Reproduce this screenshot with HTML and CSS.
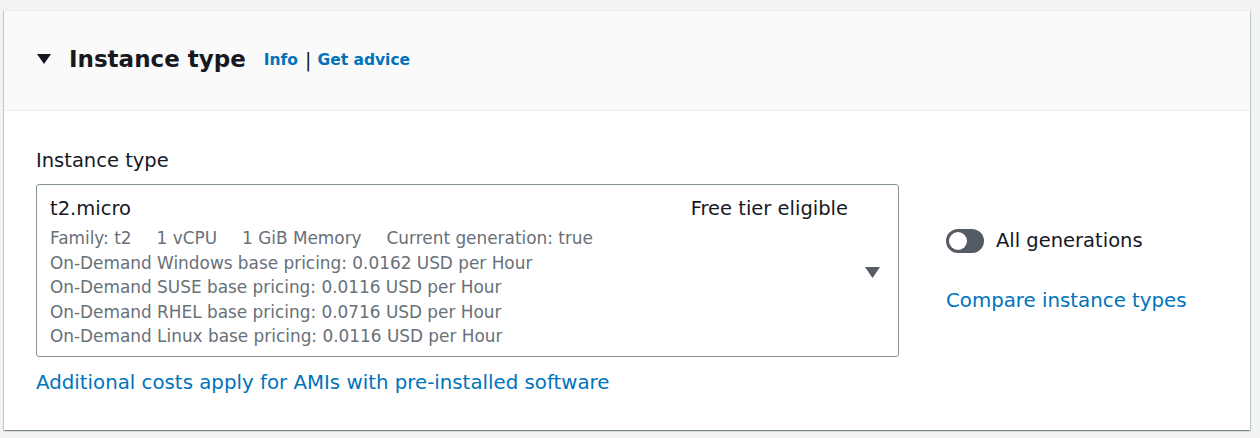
FILE: index.html
```html
<!DOCTYPE html>
<html>
<head>
<meta charset="utf-8">
<link rel="stylesheet" href="styles.css">
</head>
<body>
<section class="card">
  <header class="card-header">
    <svg class="caret" width="14" height="11" viewBox="0 0 14 11"><path d="M0 0 H14 L7 10 Z" fill="#16191f"/></svg>
    <h2 class="title">Instance type</h2>
    <span class="links"><a class="link">Info</a><span class="sep">|</span><a class="link">Get advice</a></span>
  </header>
  <div class="card-body">
    <div class="field">
      <div class="label">Instance type</div>
      <div class="select">
        <div class="select-content">
          <div class="row-top"><span class="name">t2.micro</span><span class="free">Free tier eligible</span></div>
          <div class="meta"><span>Family: t2</span><span>1 vCPU</span><span>1 GiB Memory</span><span>Current generation: true</span></div>
          <div class="desc">On-Demand Windows base pricing: 0.0162 USD per Hour</div>
          <div class="desc">On-Demand SUSE base pricing: 0.0116 USD per Hour</div>
          <div class="desc">On-Demand RHEL base pricing: 0.0716 USD per Hour</div>
          <div class="desc">On-Demand Linux base pricing: 0.0116 USD per Hour</div>
        </div>
        <svg class="dd" width="15" height="11" viewBox="0 0 15 11"><path d="M0 0 H15 L7.5 11 Z" fill="#545b64"/></svg>
      </div>
      <a class="link plain">Additional costs apply for AMIs with pre-installed software</a>
    </div>
    <div class="side">
      <div class="toggle-row"><span class="toggle"><span class="knob"></span></span><span class="toggle-label">All generations</span></div>
      <a class="link plain">Compare instance types</a>
    </div>
  </div>
</section>
</body>
</html>
```
FILE: styles.css
```css
* { box-sizing: border-box; }
body {
  margin: 0;
  background: #f2f3f3;
  font-family: "DejaVu Sans", "Open Sans", sans-serif;
  color: #16191f;
  padding: 10px 10px 8px 4px;
}
.card {
  background: #fff;
  box-shadow: 0 1px 1px 0 rgba(0,28,36,0.3), 1px 1px 1px 0 rgba(0,28,36,0.15), -1px 1px 1px 0 rgba(0,28,36,0.15);
  border-top: 1px solid #eaeded;
}
.card-header {
  background: #fafafa;
  height: 100px;
  border-bottom: 1px solid #eaeded;
  display: flex;
  align-items: center;
  padding-left: 33px;
  padding-bottom: 4px;
}
.caret { margin-right: 18px; margin-top: 2px; }
.title {
  margin: 0;
  font-size: 23px;
  font-weight: 700;
}
.links { margin-left: 18px; font-size: 15.5px; font-weight: 700; display: flex; align-items: center; margin-top: 3px; }
.sep { color: #16191f; font-weight: 400; margin: 0 6px 0 7px; font-size: 19px; }
.link { color: #0073bb; text-decoration: none; }
.link.plain { font-weight: 400; font-size: 19.8px; line-height: 24px; }
.card-body {
  display: flex;
  padding: 39px 32px 35px 32px;
}
.field { display: flex; flex-direction: column; width: 863px; }
.label { font-size: 19.5px; line-height: 22px; margin-bottom: 12px; }
.select {
  border: 1px solid #879596;
  border-radius: 3px;
  display: flex;
  align-items: center;
  padding: 11px 18px 7px 13px;
  margin-bottom: 14px;
}
.select-content { flex: 1; }
.row-top { display: flex; justify-content: space-between; font-size: 19.5px; line-height: 26px; padding-right: 17px; margin-bottom: 4px; }
.meta, .desc { font-size: 16.9px; line-height: 24.5px; color: #687078; }
.meta span { margin-right: 25px; }
.dd { margin-top: 0; }
.side { margin-left: 47px; padding-top: 79px; display: flex; flex-direction: column; }
.toggle-row { display: flex; align-items: center; margin-bottom: 36px; }
.toggle {
  width: 38px; height: 24px; border-radius: 12px; background: #545b64;
  display: inline-flex; align-items: center; padding-left: 3px; margin-right: 12px;
}
.knob { width: 18px; height: 18px; border-radius: 50%; background: #fff; }
.toggle-label { font-size: 19.5px; line-height: 24px; }
```
